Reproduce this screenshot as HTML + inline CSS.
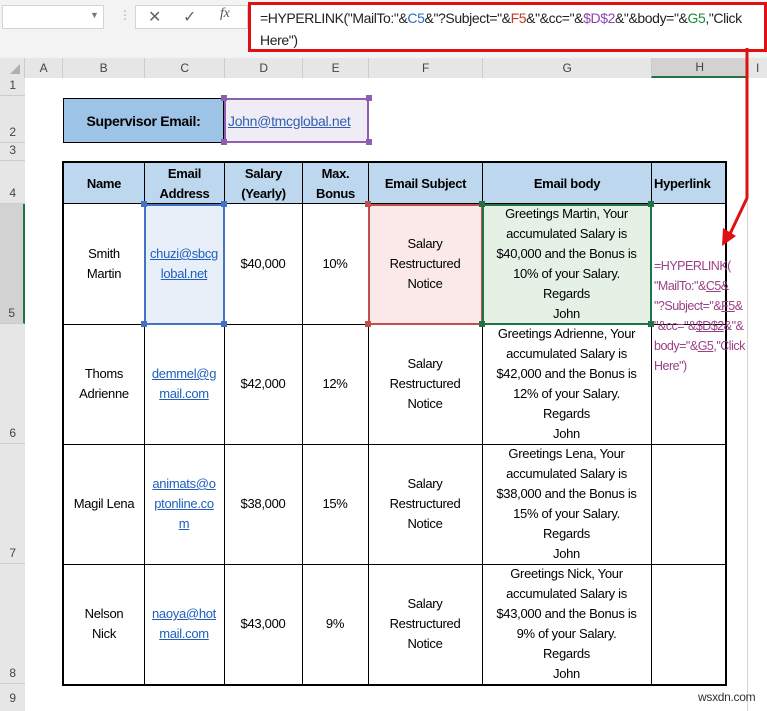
<!DOCTYPE html>
<html><head><meta charset="utf-8"><style>
*{box-sizing:border-box;margin:0;padding:0}
body{width:767px;height:711px;overflow:hidden;background:#fff;font-family:"Liberation Sans",Calibri,sans-serif;font-size:13px;color:#000;position:relative;letter-spacing:-0.3px}
.a{position:absolute}
.c{position:absolute;display:flex;align-items:center;justify-content:center;text-align:center;line-height:20px}
.hd{background:#e6e6e6;color:#444;font-size:12px}
.lnk{color:#1f5fbf;text-decoration:underline}
.h{position:absolute;width:6px;height:6px}
.th{font-weight:bold;font-size:13px;line-height:20px}
</style></head><body>
<div class="a" style="left:0;top:0;width:767px;height:58px;background:#f3f3f3"></div>
<div class="a" style="left:2px;top:5px;width:102px;height:24px;background:#fff;border:1px solid #d4d4d4"></div>
<div class="a" style="left:90px;top:10px;color:#777;font-size:9px">▼</div>
<div class="a" style="left:119px;top:8px;color:#aaa;font-size:12px">⋮</div>
<div class="a" style="left:135px;top:5px;width:113px;height:24px;background:#fff;border:1px solid #d4d4d4"></div>
<div class="a" style="left:148px;top:7px;color:#666;font-size:16px">✕</div>
<div class="a" style="left:183px;top:7px;color:#666;font-size:16px">✓</div>
<div class="a" style="left:220px;top:6px;color:#555;font-size:14px;font-style:italic;font-family:'Liberation Serif',serif">fx</div>
<div class="a" style="left:248px;top:2px;width:519px;height:50px;background:#fff;border:3px solid #e01010"></div>
<div class="a" style="left:260px;top:7px;width:505px;font-size:14px;line-height:22px;color:#222;letter-spacing:-0.4px"><span style="white-space:nowrap">=HYPERLINK("MailTo:"&amp;<span style="color:#2f6fc0">C5</span>&amp;"?Subject="&amp;<span style="color:#c0392b">F5</span>&amp;"&amp;cc="&amp;<span style="color:#8e44ad">$D$2</span>&amp;"&amp;body="&amp;<span style="color:#1e8a3a">G5</span>,"Click</span><br>Here")</div>
<div class="a hd" style="left:0;top:58px;width:767px;height:20px;border-bottom:1px solid #ccc"></div>
<div class="a" style="left:0;top:58px;width:25px;height:653px;background:#e6e6e6;border-right:1px solid #ccc"></div>
<div class="a" style="left:10px;top:64px;width:0;height:0;border-left:10px solid transparent;border-bottom:10px solid #b0b0b0"></div>
<div class="c hd" style="left:25px;top:58px;width:37px;height:20px">A</div>
<div class="c hd" style="left:62px;top:58px;width:82px;height:20px;border-left:1px solid #ccc">B</div>
<div class="c hd" style="left:144px;top:58px;width:80px;height:20px;border-left:1px solid #ccc">C</div>
<div class="c hd" style="left:224px;top:58px;width:78px;height:20px;border-left:1px solid #ccc">D</div>
<div class="c hd" style="left:302px;top:58px;width:66px;height:20px;border-left:1px solid #ccc">E</div>
<div class="c hd" style="left:368px;top:58px;width:114px;height:20px;border-left:1px solid #ccc">F</div>
<div class="c hd" style="left:482px;top:58px;width:169px;height:20px;border-left:1px solid #ccc">G</div>
<div class="c hd" style="left:651px;top:58px;width:96px;height:20px;border-left:1px solid #ccc;background:#d2d2d2;border-bottom:2px solid #217346">H</div>
<div class="c hd" style="left:747px;top:58px;width:20px;height:20px;border-left:1px solid #ccc">I</div>
<div class="c hd" style="left:0;top:78px;width:25px;height:18px;align-items:flex-end;border-bottom:1px solid #ccc">1</div>
<div class="c hd" style="left:0;top:96px;width:25px;height:47px;align-items:flex-end;border-bottom:1px solid #ccc">2</div>
<div class="c hd" style="left:0;top:143px;width:25px;height:18px;align-items:flex-end;border-bottom:1px solid #ccc">3</div>
<div class="c hd" style="left:0;top:161px;width:25px;height:43px;align-items:flex-end;border-bottom:1px solid #ccc">4</div>
<div class="c hd" style="left:0;top:204px;width:25px;height:120px;align-items:flex-end;border-bottom:1px solid #ccc;background:#d2d2d2;border-right:2px solid #217346">5</div>
<div class="c hd" style="left:0;top:324px;width:25px;height:120px;align-items:flex-end;border-bottom:1px solid #ccc">6</div>
<div class="c hd" style="left:0;top:444px;width:25px;height:120px;align-items:flex-end;border-bottom:1px solid #ccc">7</div>
<div class="c hd" style="left:0;top:564px;width:25px;height:120px;align-items:flex-end;border-bottom:1px solid #ccc">8</div>
<div class="c hd" style="left:0;top:684px;width:25px;height:27px">9</div>
<div class="a" style="left:747px;top:78px;width:1px;height:633px;background:#d4d4d4"></div>
<div class="c" style="left:63px;top:98px;width:161px;height:45px;background:#9dc3e6;border:1px solid #000;font-weight:bold;font-size:14px">Supervisor Email:</div>
<div class="c" style="left:224px;top:98px;width:145px;height:45px;background:#f0ecf6;border:2px solid #8e5fb0;justify-content:flex-start;padding-left:2px;font-size:14px"><span style="color:#2f5fb0;text-decoration:underline">John@tmcglobal.net</span></div>
<div class="h" style="left:221px;top:95px;background:#8e5fb0"></div><div class="h" style="left:366px;top:95px;background:#8e5fb0"></div>
<div class="h" style="left:221px;top:139px;background:#8e5fb0"></div><div class="h" style="left:366px;top:139px;background:#8e5fb0"></div>
<div class="a" style="left:62px;top:161px;width:665px;height:525px;border:2px solid #000"></div>
<div class="a" style="left:64px;top:163px;width:661px;height:41px;background:#bdd7ee;border-bottom:1px solid #000"></div>
<div class="c th" style="left:64px;top:163px;width:80px;height:41px">Name</div>
<div class="c th" style="left:144px;top:163px;width:80px;height:41px;border-left:1px solid #000">Email<br>Address</div>
<div class="c th" style="left:224px;top:163px;width:78px;height:41px;border-left:1px solid #000">Salary<br>(Yearly)</div>
<div class="c th" style="left:302px;top:163px;width:66px;height:41px;border-left:1px solid #000">Max.<br>Bonus</div>
<div class="c th" style="left:368px;top:163px;width:114px;height:41px;border-left:1px solid #000">Email Subject</div>
<div class="c th" style="left:482px;top:163px;width:169px;height:41px;border-left:1px solid #000">Email body</div>
<div class="c th" style="left:651px;top:163px;width:74px;height:41px;border-left:1px solid #000;justify-content:flex-start;padding-left:2px">Hyperlink</div>
<div class="a" style="left:144px;top:204px;width:1px;height:480px;background:#000"></div>
<div class="a" style="left:224px;top:204px;width:1px;height:480px;background:#000"></div>
<div class="a" style="left:302px;top:204px;width:1px;height:480px;background:#000"></div>
<div class="a" style="left:368px;top:204px;width:1px;height:480px;background:#000"></div>
<div class="a" style="left:482px;top:204px;width:1px;height:480px;background:#000"></div>
<div class="a" style="left:651px;top:324px;width:1px;height:360px;background:#000"></div>
<div class="a" style="left:64px;top:324px;width:661px;height:1px;background:#000"></div>
<div class="a" style="left:64px;top:444px;width:661px;height:1px;background:#000"></div>
<div class="a" style="left:64px;top:564px;width:661px;height:1px;background:#000"></div>
<div class="a" style="left:144px;top:204px;width:81px;height:121px;background:#e8eff9;border:2px solid #4472c4"></div>
<div class="a" style="left:368px;top:204px;width:115px;height:121px;background:#fbe9e9;border:2px solid #c0504d"></div>
<div class="a" style="left:482px;top:204px;width:170px;height:121px;background:#e6f1e6;border:2px solid #217346"></div>
<div class="h" style="left:141px;top:201px;background:#4472c4"></div><div class="h" style="left:221px;top:201px;background:#4472c4"></div>
<div class="h" style="left:141px;top:321px;background:#4472c4"></div><div class="h" style="left:221px;top:321px;background:#4472c4"></div>
<div class="h" style="left:365px;top:201px;background:#c0504d"></div><div class="h" style="left:365px;top:321px;background:#c0504d"></div>
<div class="h" style="left:479px;top:201px;background:#217346"></div><div class="h" style="left:648px;top:201px;background:#217346"></div>
<div class="h" style="left:479px;top:321px;background:#217346"></div><div class="h" style="left:648px;top:321px;background:#217346"></div>
<div class="c" style="left:64px;top:204px;width:80px;height:120px">Smith<br>Martin</div>
<div class="c lnk" style="left:144px;top:204px;width:80px;height:120px">chuzi@sbcg<br>lobal.net</div>
<div class="c" style="left:224px;top:204px;width:78px;height:120px">$40,000</div>
<div class="c" style="left:302px;top:204px;width:66px;height:120px">10%</div>
<div class="c" style="left:368px;top:204px;width:114px;height:120px">Salary<br>Restructured<br>Notice</div>
<div class="c" style="left:482px;top:204px;width:169px;height:120px">Greetings Martin, Your<br>accumulated Salary is<br>$40,000 and the Bonus is<br>10% of your Salary.<br>Regards<br>John</div>
<div class="a" style="left:654px;top:256px;width:112px;line-height:20px;color:#9b3f86;font-size:12.5px;letter-spacing:-0.5px;white-space:nowrap">=HYPERLINK(<br>"MailTo:"&amp;<u>C5</u>&amp;<br>"?Subject="&amp;<u>F5</u>&amp;<br>"&amp;cc="&amp;<u>$D$2</u>&amp;"&amp;<br>body="&amp;<u>G5</u>,"Click<br>Here")</div>
<div class="c" style="left:64px;top:324px;width:80px;height:120px">Thoms<br>Adrienne</div>
<div class="c lnk" style="left:144px;top:324px;width:80px;height:120px">demmel@g<br>mail.com</div>
<div class="c" style="left:224px;top:324px;width:78px;height:120px">$42,000</div>
<div class="c" style="left:302px;top:324px;width:66px;height:120px">12%</div>
<div class="c" style="left:368px;top:324px;width:114px;height:120px">Salary<br>Restructured<br>Notice</div>
<div class="c" style="left:482px;top:324px;width:169px;height:120px">Greetings Adrienne, Your<br>accumulated Salary is<br>$42,000 and the Bonus is<br>12% of your Salary.<br>Regards<br>John</div>
<div class="c" style="left:64px;top:444px;width:80px;height:120px">Magil Lena</div>
<div class="c lnk" style="left:144px;top:444px;width:80px;height:120px">animats@o<br>ptonline.co<br>m</div>
<div class="c" style="left:224px;top:444px;width:78px;height:120px">$38,000</div>
<div class="c" style="left:302px;top:444px;width:66px;height:120px">15%</div>
<div class="c" style="left:368px;top:444px;width:114px;height:120px">Salary<br>Restructured<br>Notice</div>
<div class="c" style="left:482px;top:444px;width:169px;height:120px">Greetings Lena, Your<br>accumulated Salary is<br>$38,000 and the Bonus is<br>15% of your Salary.<br>Regards<br>John</div>
<div class="c" style="left:64px;top:564px;width:80px;height:120px">Nelson<br>Nick</div>
<div class="c lnk" style="left:144px;top:564px;width:80px;height:120px">naoya@hot<br>mail.com</div>
<div class="c" style="left:224px;top:564px;width:78px;height:120px">$43,000</div>
<div class="c" style="left:302px;top:564px;width:66px;height:120px">9%</div>
<div class="c" style="left:368px;top:564px;width:114px;height:120px">Salary<br>Restructured<br>Notice</div>
<div class="c" style="left:482px;top:564px;width:169px;height:120px">Greetings Nick, Your<br>accumulated Salary is<br>$43,000 and the Bonus is<br>9% of your Salary.<br>Regards<br>John</div>
<svg class="a" style="left:715px;top:48px" width="40" height="200"><path d="M32 0 V150 L14 188" stroke="#e01010" stroke-width="3" fill="none"/><path d="M7 198 L8 180 L21 188 Z" fill="#e01010"/></svg>
<div class="a" style="left:698px;top:690px;font-size:12px;color:#333">wsxdn.com</div>
</body></html>
